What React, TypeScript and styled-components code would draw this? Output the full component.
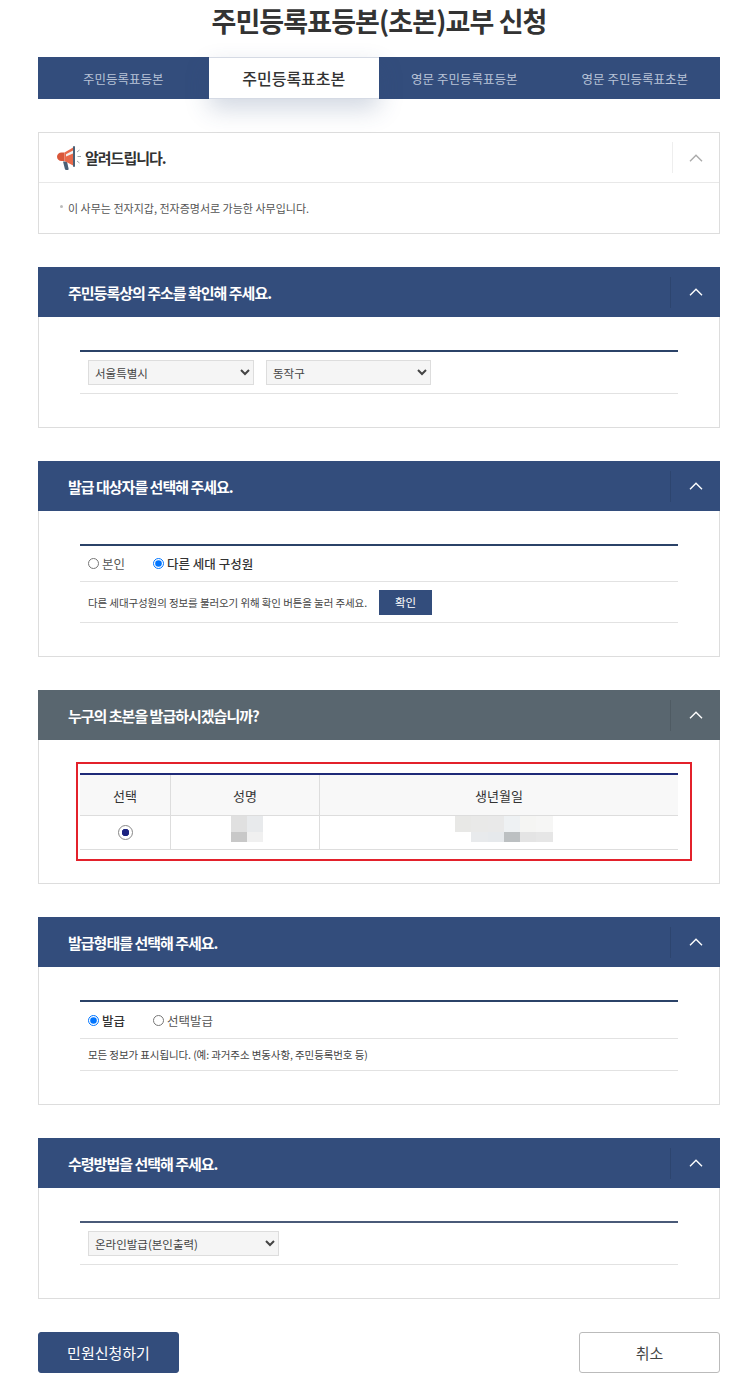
import { ReactNode } from "react";
import styled, { createGlobalStyle } from "styled-components";

const navy = "#334d7c";

const GlobalStyle = createGlobalStyle`
  html, body {
    margin: 0;
    padding: 0;
    background: #fff;
    font-family: "Noto Sans CJK KR", "Noto Sans", sans-serif;
    color: #333;
  }
`;

const Page = styled.div`
  box-sizing: border-box;
  width: 740px;
  height: 1388px;
  padding: 0 20px 18px 38px;
  overflow: hidden;
`;

const Title = styled.h1`
  margin: 0 0 15px;
  height: 42px;
  line-height: 42px;
  text-align: center;
  font-size: 27px;
  font-weight: 700;
  letter-spacing: -0.9px;
  color: #333;
`;

const Tabs = styled.div`
  display: grid;
  grid-template-columns: repeat(4, 1fr);
  height: 42px;
  background: ${navy};
  margin-bottom: 33px;
`;

const Tab = styled.div<{ $active?: boolean }>`
  display: flex;
  align-items: center;
  justify-content: center;
  font-size: ${(p) => (p.$active ? "16px" : "12.5px")};
  font-weight: ${(p) => (p.$active ? 500 : 400)};
  color: ${(p) => (p.$active ? "#333" : "#b9c4d8")};
  background: ${(p) => (p.$active ? "#fff" : "transparent")};
  box-shadow: ${(p) => (p.$active ? "0 10px 24px rgba(51, 77, 124, 0.22)" : "none")};
  border-top: ${(p) => (p.$active ? "1px solid #d5dae4" : "none")};
  border-bottom: ${(p) => (p.$active ? "1px solid #d5dae4" : "none")};
  & + & {
    border-left: ${(p) => (p.$active ? "none" : "1px solid #3f5887")};
  }
`;

const Box = styled.section`
  border: 1px solid #ddd;
  margin-bottom: 33px;
`;

const NoticeHead = styled.div`
  display: flex;
  align-items: center;
  height: 49px;
  border-bottom: 1px solid #e8e8e8;
  padding-left: 16px;
  gap: 3px;
`;

const NoticeTitle = styled.h2`
  flex: 1;
  margin: 0;
  font-size: 15px;
  font-weight: 700;
  letter-spacing: -1px;
  color: #333;
`;

const NoticeBody = styled.p`
  position: relative;
  margin: 0;
  height: 50px;
  line-height: 50px;
  padding-left: 29px;
  font-size: 11px;
  color: #555;
  &::before {
    content: "";
    position: absolute;
    left: 21px;
    top: 22px;
    width: 3px;
    height: 3px;
    border-radius: 50%;
    background: #bbb;
  }
`;

const Toggle = styled.div<{ $light?: boolean }>`
  display: flex;
  align-items: center;
  justify-content: center;
  width: ${(p) => (p.$light ? "46px" : "49px")};
  height: 31px;
  border-left: 1px solid ${(p) => (p.$light ? "#eee" : "rgba(0, 0, 0, 0.1)")};
  color: ${(p) => (p.$light ? "#aaa" : "#fff")};
`;

const SectionHead = styled.div<{ $muted?: boolean }>`
  display: flex;
  align-items: center;
  height: 50px;
  margin: -1px -1px 0;
  padding-left: 30px;
  background: ${(p) => (p.$muted ? "#59666f" : navy)};
`;

const SectionTitle = styled.h2`
  flex: 1;
  margin: 0;
  font-size: 15px;
  font-weight: 700;
  letter-spacing: -1px;
  color: #fff;
`;

const SectionBody = styled.div`
  padding: 33px 41px;
`;

const Form = styled.div<{ $lineColor?: string }>`
  border-top: 2px solid ${(p) => p.$lineColor || "#2b4368"};
`;

const Row = styled.div<{ $h: number }>`
  display: flex;
  align-items: center;
  box-sizing: border-box;
  height: ${(p) => p.$h}px;
  padding: 0 8px;
  border-bottom: 1px solid #e2e2e2;
  gap: 12px;
`;

const Select = styled.select<{ $w: number }>`
  width: ${(p) => p.$w}px;
  height: 25px;
  padding: 0 2px;
  font-family: inherit;
  font-size: 11.5px;
  color: #444;
  background: #f5f5f5;
  border: 1px solid #ddd;
  border-radius: 0;
`;

const RadioGroup = styled.div`
  display: flex;
  gap: 28px;
`;

const RadioLabel = styled.label<{ $checked?: boolean }>`
  display: flex;
  align-items: center;
  gap: 3px;
  font-size: 12.5px;
  font-weight: ${(p) => (p.$checked ? 500 : 400)};
  color: ${(p) => (p.$checked ? "#333" : "#555")};
  input {
    width: 11px;
    height: 11px;
    margin: 0;
  }
`;

const Hint = styled.span`
  font-size: 10.5px;
  letter-spacing: -0.1px;
  color: #444;
`;

const SmallButton = styled.button`
  width: 53px;
  height: 25px;
  padding: 0;
  border: none;
  font-family: inherit;
  font-size: 11.5px;
  color: #fff;
  background: ${navy};
`;

const TableWrap = styled.div`
  position: relative;
`;

const RedFrame = styled.div`
  position: absolute;
  left: -4px;
  right: -14px;
  top: -11px;
  bottom: -11px;
  border: 2px solid #e3212b;
  pointer-events: none;
`;

const Table = styled.div`
  display: grid;
  grid-template-columns: 90px 149px 1fr;
  grid-template-rows: 41px 33px;
  border-top: 2px solid #1f2a78;
  border-bottom: 1px solid #ddd;
`;

const HeadCell = styled.div`
  display: flex;
  align-items: center;
  justify-content: center;
  background: #f8f8f8;
  border-bottom: 1px solid #ddd;
  font-size: 13px;
  color: #333;
  & + & {
    border-left: 1px solid #ddd;
  }
`;

const Cell = styled.div<{ $pad?: number; $center?: boolean }>`
  display: flex;
  justify-content: ${(p) => (p.$center ? "center" : "flex-start")};
  align-items: ${(p) => (p.$center ? "center" : "flex-start")};
  padding-left: ${(p) => p.$pad || 0}px;
  & + & {
    border-left: 1px solid #ddd;
  }
`;

const PickRadio = styled.span`
  box-sizing: border-box;
  width: 15px;
  height: 15px;
  border-radius: 50%;
  border: 1px solid #888;
  background: radial-gradient(circle, #1c2380 0 3.5px, #fff 4px);
`;

const Mosaic = styled.div<{ $cols: number; $cw: number }>`
  display: grid;
  grid-template-columns: repeat(${(p) => p.$cols}, ${(p) => p.$cw}px);
  grid-template-rows: 16px 10px;
`;

const Blur = styled.div<{ $c: string }>`
  background: ${(p) => p.$c};
`;

const Actions = styled.div`
  display: flex;
  justify-content: space-between;
`;

const ActionButton = styled.button<{ $primary?: boolean }>`
  width: 141px;
  height: 41px;
  padding: 0;
  border-radius: 3px;
  border: 1px solid ${(p) => (p.$primary ? navy : "#bbb")};
  background: ${(p) => (p.$primary ? navy : "#fff")};
  color: ${(p) => (p.$primary ? "#fff" : "#444")};
  font-family: inherit;
  font-size: 15px;
`;

function Chevron() {
  return (
    <svg width="14" height="8" viewBox="0 0 14 8" fill="none" stroke="currentColor" strokeWidth="1.4">
      <path d="M1 7.2 7 1.2l6 6" />
    </svg>
  );
}

function Megaphone() {
  return (
    <svg width="27" height="26" viewBox="0 0 27 26">
      <path d="M8 16.5h4l1.6 7.2c.2.9-.4 1.3-1.2 1.3h-1.2c-.7 0-1.1-.3-1.3-1z" fill="#4a6076" />
      <path d="M6.5 7.5h3V16h-3C4 16 2 14.2 2 11.7S4 7.5 6.5 7.5z" fill="#d9573a" />
      <path d="M9.5 7.5 19 2v19l-9.5-5z" fill="#e8694a" />
      <path d="M11 9.2 18 5.5v3l-7 3z" fill="#f2f2f2" />
      <rect x="18" y="1" width="2" height="21" rx="1" fill="#4a6076" />
      <path d="M22 7l2.5-2M22.5 11.5H26M22 16l2.5 2" stroke="#9aa5ae" strokeWidth="1" fill="none" />
    </svg>
  );
}

function Section({ title, muted, children }: { title: string; muted?: boolean; children: ReactNode }) {
  return (
    <Box>
      <SectionHead $muted={muted}>
        <SectionTitle>{title}</SectionTitle>
        <Toggle>
          <Chevron />
        </Toggle>
      </SectionHead>
      <SectionBody>{children}</SectionBody>
    </Box>
  );
}

const nameBlur = ["#e0e0e0", "#e8eaec", "#c8c8c8", "#f0f0f0"];
const birthBlur = [
  "#e8e8e6", "#e9e9e8", "#e9e9e9", "#eef1f3", "#f5f5f3", "#f6f6f5",
  "#ffffff", "#e8eaec", "#e6e9ec", "#bcc0c2", "#e4e4e4", "#e6e6e6",
];

export default function App() {
  return (
    <Page>
      <GlobalStyle />
      <Title>주민등록표등본(초본)교부 신청</Title>
      <Tabs>
        <Tab>주민등록표등본</Tab>
        <Tab $active>주민등록표초본</Tab>
        <Tab>영문 주민등록표등본</Tab>
        <Tab>영문 주민등록표초본</Tab>
      </Tabs>

      <Box>
        <NoticeHead>
          <Megaphone />
          <NoticeTitle>알려드립니다.</NoticeTitle>
          <Toggle $light>
            <Chevron />
          </Toggle>
        </NoticeHead>
        <NoticeBody>이 사무는 전자지갑, 전자증명서로 가능한 사무입니다.</NoticeBody>
      </Box>

      <Section title="주민등록상의 주소를 확인해 주세요.">
        <Form>
          <Row $h={42}>
            <Select $w={166} defaultValue="서울특별시">
              <option>서울특별시</option>
            </Select>
            <Select $w={165} defaultValue="동작구">
              <option>동작구</option>
            </Select>
          </Row>
        </Form>
      </Section>

      <Section title="발급 대상자를 선택해 주세요.">
        <Form>
          <Row $h={36}>
            <RadioGroup>
              <RadioLabel>
                <input type="radio" name="target" />
                본인
              </RadioLabel>
              <RadioLabel $checked>
                <input type="radio" name="target" defaultChecked />
                다른 세대 구성원
              </RadioLabel>
            </RadioGroup>
          </Row>
          <Row $h={41}>
            <Hint>다른 세대구성원의 정보를 불러오기 위해 확인 버튼을 눌러 주세요.</Hint>
            <SmallButton>확인</SmallButton>
          </Row>
        </Form>
      </Section>

      <Section title="누구의 초본을 발급하시겠습니까?" muted>
        <TableWrap>
          <RedFrame />
          <Table>
            <HeadCell>선택</HeadCell>
            <HeadCell>성명</HeadCell>
            <HeadCell>생년월일</HeadCell>
            <Cell $center>
              <PickRadio />
            </Cell>
            <Cell $pad={60}>
              <Mosaic $cols={2} $cw={16}>
                {nameBlur.map((c, i) => (
                  <Blur key={i} $c={c} />
                ))}
              </Mosaic>
            </Cell>
            <Cell $pad={135}>
              <Mosaic $cols={6} $cw={16.3}>
                {birthBlur.map((c, i) => (
                  <Blur key={i} $c={c} />
                ))}
              </Mosaic>
            </Cell>
          </Table>
        </TableWrap>
      </Section>

      <Section title="발급형태를 선택해 주세요.">
        <Form>
          <Row $h={37}>
            <RadioGroup>
              <RadioLabel $checked>
                <input type="radio" name="kind" defaultChecked />
                발급
              </RadioLabel>
              <RadioLabel>
                <input type="radio" name="kind" />
                선택발급
              </RadioLabel>
            </RadioGroup>
          </Row>
          <Row $h={32}>
            <Hint>모든 정보가 표시됩니다. (예: 과거주소 변동사항, 주민등록번호 등)</Hint>
          </Row>
        </Form>
      </Section>

      <Section title="수령방법을 선택해 주세요.">
        <Form $lineColor="#4a5a78">
          <Row $h={42}>
            <Select $w={191} defaultValue="온라인발급(본인출력)">
              <option>온라인발급(본인출력)</option>
            </Select>
          </Row>
        </Form>
      </Section>

      <Actions>
        <ActionButton $primary>민원신청하기</ActionButton>
        <ActionButton>취소</ActionButton>
      </Actions>
    </Page>
  );
}
